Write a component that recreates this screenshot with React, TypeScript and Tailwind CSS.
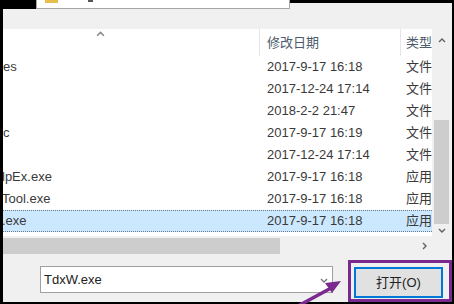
import React from "react";

type Row = {
  name: string;
  shift: string;
  date: string;
  type: string;
  selected?: boolean;
};

const rows: Row[] = [
  { name: "es", shift: "", date: "2017-9-17 16:18", type: "文件" },
  { name: "", shift: "", date: "2017-12-24 17:14", type: "文件" },
  { name: "", shift: "", date: "2018-2-2 21:47", type: "文件" },
  { name: "c", shift: "", date: "2017-9-17 16:19", type: "文件" },
  { name: "", shift: "", date: "2017-12-24 17:14", type: "文件" },
  { name: "lpEx.exe", shift: "-ml-[1px]", date: "2017-9-17 16:18", type: "应用" },
  { name: "Tool.exe", shift: "-ml-[1px]", date: "2017-9-17 16:18", type: "应用" },
  { name: ".exe", shift: "-ml-[1px]", date: "2017-9-17 16:18", type: "应用", selected: true },
];

// small chevron used by the scroll bars, sort mark and combo box
const Chevron = ({ dir, color = "#606060", size = 8 }: { dir: "up" | "down" | "right"; color?: string; size?: number }) => {
  const d =
    dir === "up" ? "M1 6 L4 3 L7 6" : dir === "down" ? "M1 3 L4 6 L7 3" : "M3 1 L6 4 L3 7";
  return (
    <svg width={size} height={size} viewBox="0 0 8 8" fill="none">
      <path d={d} stroke={color} strokeWidth="1.4" />
    </svg>
  );
};

export default function App() {
  return (
    <div className="relative w-[454px] h-[304px] overflow-hidden bg-black pl-[3px] pr-[2px] pb-[2px] font-['Liberation_Sans','Noto_Sans_CJK_SC',sans-serif] text-[13px] text-[#3a3a3a]">
      <div className="flex h-full flex-col bg-[#f0f0f0]">
        {/* top strip with the cut-off address box */}
        <div className="flex h-[9px]">
          <div className="w-[33px] bg-black" />
          <div className="relative w-[254px] border-x border-b border-[#a6a6a6] bg-white">
            <div className="absolute left-[8px] top-0 h-[3px] w-[13px] bg-[#e9bd4c]" />
            <div className="absolute left-[51px] top-0 h-[2px] w-[5px] bg-[#555]" />
          </div>
          <div className="flex-1 border-t-[3px] border-black" />
        </div>
        <div className="h-[20px]" />

        {/* file list */}
        <div className="flex h-[207px]">
          <div className="flex w-[429px] flex-col overflow-hidden bg-white">
            <div className="flex h-[27px] shrink-0 items-center text-[#4c5a6c]">
              <div className="relative h-full w-[256px]">
                <div className="absolute left-[93px] top-0">
                  <Chevron dir="up" color="#8a8a8a" size={9} />
                </div>
              </div>
              <div className="flex h-full w-[141px] items-center border-l border-[#e5e5e5] pl-[7px]">修改日期</div>
              <div className="flex h-full flex-1 items-center whitespace-nowrap border-l border-[#e5e5e5] pl-[5px]">类型</div>
            </div>
            {rows.map((row, i) => (
              <div
                key={i}
                className={
                  row.selected
                    ? "flex h-[22px] shrink-0 items-center whitespace-nowrap border-y border-dotted border-[#6b7b8c] bg-[#cce8ff]"
                    : "flex h-[22px] shrink-0 items-center whitespace-nowrap"
                }
              >
                <div className="w-[256px] overflow-hidden">
                  <span className={"block " + row.shift}>{row.name}</span>
                </div>
                <div className="w-[141px] pl-[8px]">{row.date}</div>
                <div className="flex-1 overflow-hidden pl-[6px]">{row.type}</div>
              </div>
            ))}
          </div>
          {/* vertical scroll bar */}
          <div className="flex w-[19px] flex-col bg-[#f0f0f0]">
            <div className="flex h-[21px] items-center justify-center">
              <Chevron dir="up" />
            </div>
            <div className="h-[70px]" />
            <div className="mx-[2px] h-[104px] bg-[#cdcdcd]" />
            <div className="flex flex-1 items-center justify-center">
              <Chevron dir="down" />
            </div>
          </div>
        </div>

        {/* horizontal scroll bar */}
        <div className="flex h-[20px]">
          <div className="flex w-[429px] items-center">
            <div className="h-[16px] w-[277px] bg-[#cdcdcd]" />
            <div className="flex-1" />
            <div className="mr-[4px] flex w-[8px] justify-center">
              <Chevron dir="right" />
            </div>
          </div>
        </div>

        {/* file name + open button */}
        <div className="flex flex-1 items-start">
          <div className="ml-[37px] mt-[10px] flex h-[27px] w-[293px] items-center justify-between border border-[#a0a0a0] bg-white pl-[3px] pr-[4px] text-[#222]">
            <span>TdxW.exe</span>
            <Chevron dir="down" color="#777" />
          </div>
          <div className="ml-[21px] mt-[11px] flex h-[31px] w-[89px] items-center justify-center border-2 border-[#0078d7] bg-[#e1e1e1] text-[#222]">
            打开(O)
          </div>
        </div>
      </div>

      {/* annotation overlay */}
      <div className="pointer-events-none absolute left-[348px] top-[260px] h-[42px] w-[104px] border-[3px] border-[#7a2a8f]" />
      <svg className="pointer-events-none absolute left-0 top-0" width="454" height="304" viewBox="0 0 454 304">
        <line x1="298" y1="306" x2="333" y2="287" stroke="#7a2a8f" strokeWidth="3.5" />
        <polygon points="341,281 325,283 332,293" fill="#7a2a8f" />
      </svg>
    </div>
  );
}
